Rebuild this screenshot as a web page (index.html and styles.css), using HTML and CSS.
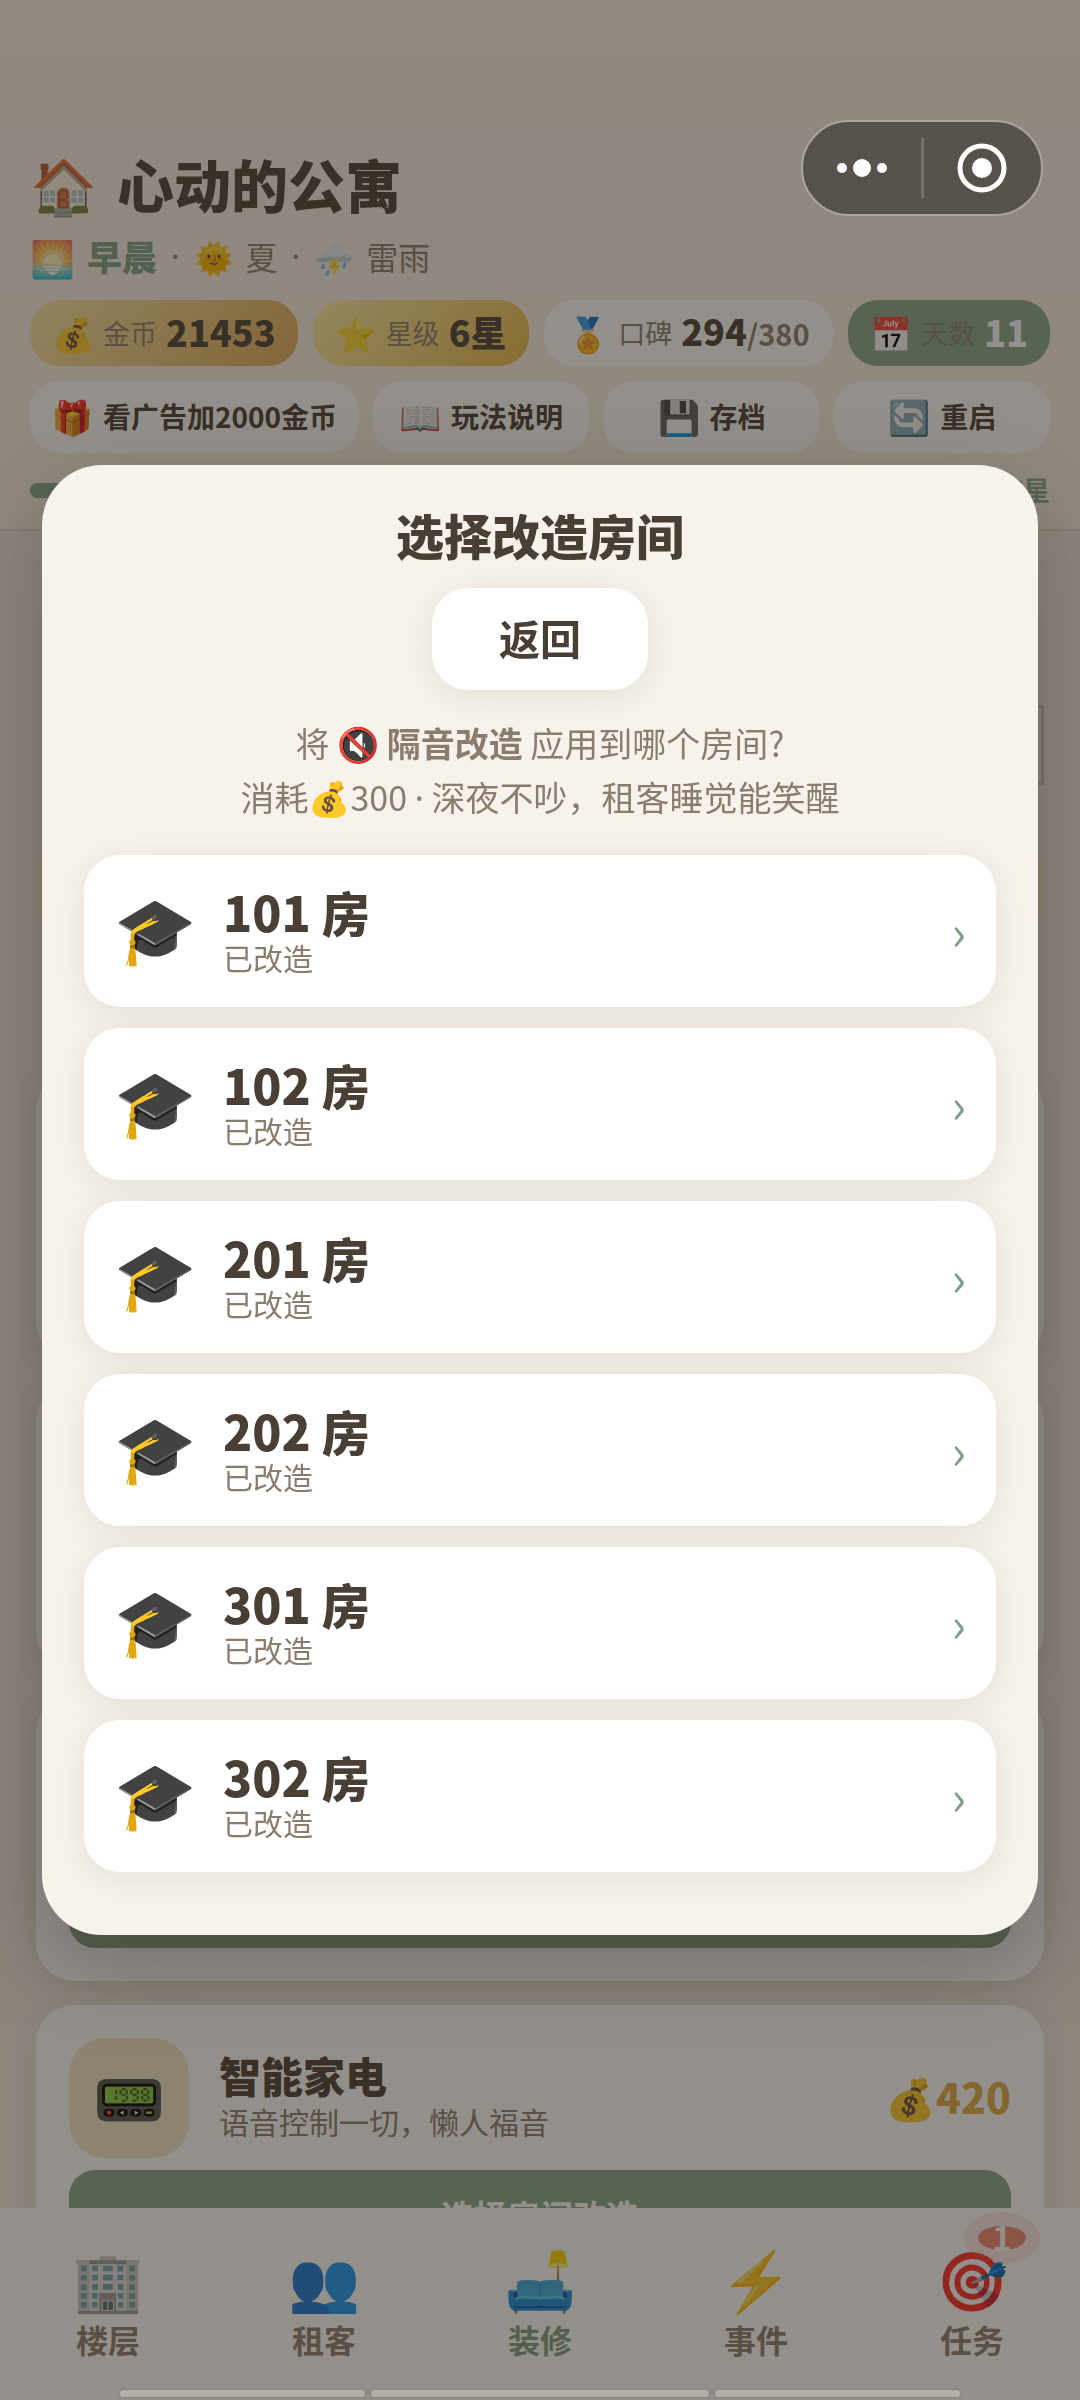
FILE: index.html
```html
<!DOCTYPE html>
<html lang="zh-CN">
<head>
  <meta charset="UTF-8">
  <meta name="viewport" content="width=device-width, initial-scale=1.0">
  <title>心动的公寓</title>
  <link rel="stylesheet" href="styles.css">
</head>
<body>
  <div class="app">
    <header class="header">
      <h1><span class="logo">🏠</span>心动的公寓</h1>
      <div class="status">
        <span class="status-icon">🌅</span>
        <strong>早晨</strong>
        <span class="dot">·</span>
        <span>🌞</span>
        <span>夏</span>
        <span class="dot">·</span>
        <span>⛈️</span>
        <span>雷雨</span>
      </div>
      <div class="chips">
        <div class="chip coin"><span class="icon">💰</span><span class="label">金币</span><b>21453</b></div>
        <div class="chip star"><span class="icon">⭐</span><span class="label">星级</span><b>6星</b></div>
        <div class="chip fame"><span class="icon">🏅</span><span class="label">口碑</span><b>294<small>/380</small></b></div>
        <div class="chip day"><span class="icon">📅</span><span class="label">天数</span><b>11</b></div>
      </div>
      <div class="actions">
        <button type="button"><span class="icon">🎁</span>看广告加2000金币</button>
        <button type="button"><span class="icon">📖</span>玩法说明</button>
        <button type="button"><span class="icon">💾</span>存档</button>
        <button type="button"><span class="icon">🔄</span>重启</button>
      </div>
      <div class="level">
        <div class="bar"><div class="bar-fill"></div></div>
        <span>7星</span>
      </div>
    </header>

    <main class="content">
      <div class="scene"><div class="frame"></div></div>
      <div class="banner"></div>
      <section class="goods">
        <article class="card"></article>
        <article class="card"></article>
        <article class="card">
          <div class="card-top"></div>
          <button type="button" class="apply dark"></button>
        </article>
        <article class="card">
          <div class="card-top">
            <div class="thumb">📟</div>
            <div class="card-text">
              <h3>智能家电</h3>
              <p>语音控制一切，懒人福音</p>
            </div>
            <span class="price">💰420</span>
          </div>
          <button type="button" class="apply">选择房间改造</button>
        </article>
      </section>
    </main>

    <nav class="tabbar">
      <a href="#floors"><span class="tab-icon">🏢</span>楼层</a>
      <a href="#tenants"><span class="tab-icon">👥</span>租客</a>
      <a href="#decor" class="active"><span class="tab-icon">🛋️</span>装修</a>
      <a href="#events"><span class="tab-icon">⚡</span>事件</a>
      <a href="#tasks"><span class="tab-icon">🎯</span>任务<span class="badge"><i>1</i></span></a>
    </nav>
  </div>

  <div class="overlay">
    <div class="modal" role="dialog" aria-labelledby="modalTitle">
      <h2 id="modalTitle">选择改造房间</h2>
      <button type="button" class="back">返回</button>
      <p class="desc">将 🔇 <b>隔音改造</b> 应用到哪个房间?<br>消耗💰300 <span class="dot">·</span> 深夜不吵，租客睡觉能笑醒</p>
      <div class="rooms">
        <button type="button" class="room">
          <span class="room-icon">🎓</span>
          <span class="room-text"><b>101 房</b><span>已改造</span></span>
          <span class="arrow">›</span>
        </button>
        <button type="button" class="room">
          <span class="room-icon">🎓</span>
          <span class="room-text"><b>102 房</b><span>已改造</span></span>
          <span class="arrow">›</span>
        </button>
        <button type="button" class="room">
          <span class="room-icon">🎓</span>
          <span class="room-text"><b>201 房</b><span>已改造</span></span>
          <span class="arrow">›</span>
        </button>
        <button type="button" class="room">
          <span class="room-icon">🎓</span>
          <span class="room-text"><b>202 房</b><span>已改造</span></span>
          <span class="arrow">›</span>
        </button>
        <button type="button" class="room">
          <span class="room-icon">🎓</span>
          <span class="room-text"><b>301 房</b><span>已改造</span></span>
          <span class="arrow">›</span>
        </button>
        <button type="button" class="room">
          <span class="room-icon">🎓</span>
          <span class="room-text"><b>302 房</b><span>已改造</span></span>
          <span class="arrow">›</span>
        </button>
      </div>
    </div>
  </div>

  <div class="capsule">
    <button type="button" aria-label="更多">
      <svg width="52" height="20" viewBox="0 0 52 20" fill="#fff">
        <circle cx="6" cy="10" r="5"/>
        <circle cx="26" cy="10" r="9"/>
        <circle cx="46" cy="10" r="5"/>
      </svg>
    </button>
    <span class="divider"></span>
    <button type="button" aria-label="关闭">
      <svg width="50" height="50" viewBox="0 0 50 50">
        <circle cx="25" cy="25" r="22" fill="none" stroke="#fff" stroke-width="5"/>
        <circle cx="25" cy="25" r="10" fill="#fff"/>
      </svg>
    </button>
  </div>

  <div class="gesture"><span></span><span></span><span></span></div>
</body>
</html>
```
FILE: styles.css
```css
* {
  box-sizing: border-box;
}

body {
  margin: 0;
  font-family: "Noto Sans CJK SC", "Noto Sans", sans-serif;
  font-size: 32px;
  color: #4a3f35;
  background: #f1e8df;
}

h1, h2, h3, p {
  margin: 0;
}

button {
  border: none;
  font-family: inherit;
  color: inherit;
  cursor: pointer;
}

.app {
  display: flex;
  flex-direction: column;
  height: 100vh;
  overflow: hidden;
}

/* Header */
.header {
  padding: 147px 30px 22px;
  background: linear-gradient(#fbf2e4, #f9efe7 35%, #f9f0e2);
  border-bottom: 2px solid #e6d8c8;
}

.header h1 {
  display: flex;
  align-items: center;
  gap: 20px;
  font-size: 57px;
  font-weight: 900;
  line-height: 72px;
}

.logo {
  font-size: 54px;
}

.status {
  display: flex;
  align-items: center;
  gap: 12px;
  margin: 11px 0 18px;
  line-height: 52px;
  color: #8b7d6e;
}

.status strong {
  font-size: 35px;
  font-weight: 900;
  color: #7fa087;
}

.status-icon {
  font-size: 36px;
}

/* the CJK face draws this one full width */
.dot {
  font-family: "Noto Sans", sans-serif;
  line-height: 1;
}

.status .dot {
  margin: 0 2px;
}

.chips,
.actions {
  display: flex;
  gap: 15px;
}

.chip {
  display: flex;
  align-items: center;
  justify-content: center;
  gap: 9px;
  height: 66px;
  padding: 0 22px;
  border-radius: 30px;
  white-space: nowrap;
  line-height: 40px;
  background: #fff;
}

.icon {
  font-size: 34px;
  line-height: 40px;
}

.chip .label {
  font-size: 27px;
  color: #8b7d6e;
}

.chip b {
  padding-bottom: 4px;
  font-size: 36px;
  font-weight: 900;
}

.chip small {
  font-size: 29px;
  font-weight: 700;
  color: #8b7d6e;
}

.coin {
  background: linear-gradient(135deg, #f7e7a8, #e0aa56);
}

.star {
  background: linear-gradient(135deg, #fbeea8, #e8b848);
}

.fame {
  flex: 1;
}

.day {
  background: #88a68c;
}

.day b {
  color: #fff;
}

.actions {
  margin-top: 15px;
}

.actions button {
  flex: 1;
  display: flex;
  align-items: center;
  justify-content: center;
  gap: 10px;
  height: 72px;
  padding: 0 21px 2px;
  border-radius: 30px;
  background: #fff;
  font-size: 28px;
  font-weight: 700;
  white-space: nowrap;
}

.level {
  display: flex;
  align-items: center;
  gap: 15px;
  margin-top: 20px;
  font-size: 27px;
  font-weight: 700;
  line-height: 34px;
  color: #88a68c;
}

.bar {
  flex: 1;
  height: 15px;
  border-radius: 8px;
  background: #eadfce;
}

.bar-fill {
  width: 77%;
  height: 100%;
  border-radius: 8px;
  background: #88a68c;
}

/* Page content */
.content {
  flex: 1;
  min-height: 0;
  padding: 0 36px;
  overflow: hidden;
}

.scene {
  display: flex;
  align-items: flex-end;
  justify-content: flex-end;
  height: 254px;
  margin-bottom: 60px;
}

.frame {
  width: 60px;
  height: 80px;
  border: 3px solid #cdbfb0;
}

.banner {
  height: 86px;
  margin-bottom: 141px;
  border-radius: 30px;
  background: #f0e2c6;
}

.goods {
  display: flex;
  flex-direction: column;
  gap: 24px;
}

.card {
  flex: none;
  min-height: 287px;
  padding: 33px;
  border-radius: 38px;
  background: #fff;
  box-shadow: 0 6px 24px rgba(110, 120, 90, 0.15);
}

.card-top {
  display: flex;
  align-items: center;
  gap: 30px;
  height: 120px;
}

.thumb {
  display: flex;
  align-items: center;
  justify-content: center;
  width: 120px;
  height: 120px;
  padding-bottom: 6px;
  border-radius: 36px;
  font-size: 58px;
  background: #f0e4c8;
}

.card-text {
  flex: 1;
  padding-bottom: 4px;
}

.card h3 {
  font-size: 42px;
  font-weight: 900;
  line-height: 50px;
}

.card p {
  font-size: 30px;
  line-height: 42px;
  color: #8b7d6e;
}

.price {
  padding-bottom: 4px;
  font-size: 41px;
  font-weight: 900;
  color: #e0ac46;
}

.apply {
  display: block;
  width: 100%;
  height: 89px;
  margin-top: 12px;
  border-radius: 26px;
  background: #88a68c;
  color: #fff;
  font-size: 33px;
  font-weight: 700;
}

.apply.dark {
  background: #84a080;
}

/* Bottom tabs */
.tabbar {
  display: flex;
  flex: none;
  height: 192px;
  background: #fff;
}

.tabbar a {
  position: relative;
  flex: 1;
  display: flex;
  flex-direction: column;
  align-items: center;
  padding-top: 32px;
  font-size: 32px;
  font-weight: 700;
  line-height: 42px;
  text-decoration: none;
  color: #8b7d6e;
}

.tabbar .active {
  color: #7f9a80;
}

.tab-icon {
  margin-bottom: 4px;
  font-size: 58px;
  font-weight: 400;
  line-height: 74px;
}

.badge {
  position: absolute;
  top: 4px;
  right: 40px;
  display: flex;
  align-items: center;
  justify-content: center;
  width: 76px;
  height: 52px;
  border-radius: 50%;
  background: rgba(240, 130, 110, 0.2);
}

.badge i {
  width: 48px;
  height: 24px;
  border-radius: 50%;
  background: #ec8672;
  color: #fff;
  font-size: 33px;
  font-style: normal;
  font-weight: 700;
  line-height: 22px;
  text-align: center;
}

/* Room picker */
.overlay {
  position: fixed;
  inset: 0;
  display: flex;
  align-items: center;
  padding: 0 42px;
  background: rgba(40, 34, 26, 0.5);
}

.modal {
  width: 100%;
  padding: 41px 42px 63px;
  border-radius: 60px;
  background: #f7f2eb;
  text-align: center;
  box-shadow: 0 30px 90px rgba(40, 36, 32, 0.3);
}

.modal h2 {
  font-size: 48px;
  font-weight: 900;
  line-height: 56px;
}

.back {
  width: 216px;
  height: 102px;
  margin-top: 26px;
  padding-bottom: 6px;
  border-radius: 36px;
  background: #fff;
  font-size: 41px;
  font-weight: 700;
  box-shadow: 0 6px 36px rgba(110, 130, 100, 0.14);
}

.desc {
  margin: 26px 0 31px;
  font-size: 34px;
  line-height: 54px;
  color: #8b7d6e;
}

.rooms {
  display: flex;
  flex-direction: column;
  gap: 21px;
}

.room {
  display: flex;
  align-items: center;
  gap: 27px;
  height: 152px;
  padding: 0 30px;
  border-radius: 36px;
  background: #fff;
  text-align: left;
  box-shadow: 0 6px 36px rgba(110, 130, 100, 0.14);
}

.room-icon {
  padding-bottom: 12px;
  font-size: 66px;
  line-height: 80px;
}

.room-text {
  flex: 1;
  display: flex;
  flex-direction: column;
}

.room-text b {
  font-size: 48px;
  font-weight: 900;
  line-height: 52px;
}

.room-text span {
  font-size: 30px;
  line-height: 40px;
  color: #8b7d6e;
}

.arrow {
  padding-bottom: 2px;
  font-size: 48px;
  line-height: 48px;
  color: #7f9f88;
}

/* Mini program capsule */
.capsule {
  position: fixed;
  top: 120px;
  right: 37px;
  display: flex;
  align-items: center;
  width: 242px;
  height: 96px;
  border: 2px solid #aaa59d;
  border-radius: 48px;
  background: #57524b;
}

.capsule button {
  flex: 1;
  display: flex;
  align-items: center;
  justify-content: center;
  padding: 0;
  background: none;
}

.divider {
  width: 3px;
  height: 60px;
  background: #77726b;
}

.gesture {
  position: fixed;
  bottom: 3px;
  left: 120px;
  right: 120px;
  display: flex;
  gap: 6px;
}

.gesture span {
  flex: 1;
  height: 7px;
  border-radius: 4px;
  background: #b3b0aa;
  box-shadow: 0 0 2px #6c6862;
}

.gesture span:nth-child(2) {
  flex: 1.38;
}
```
